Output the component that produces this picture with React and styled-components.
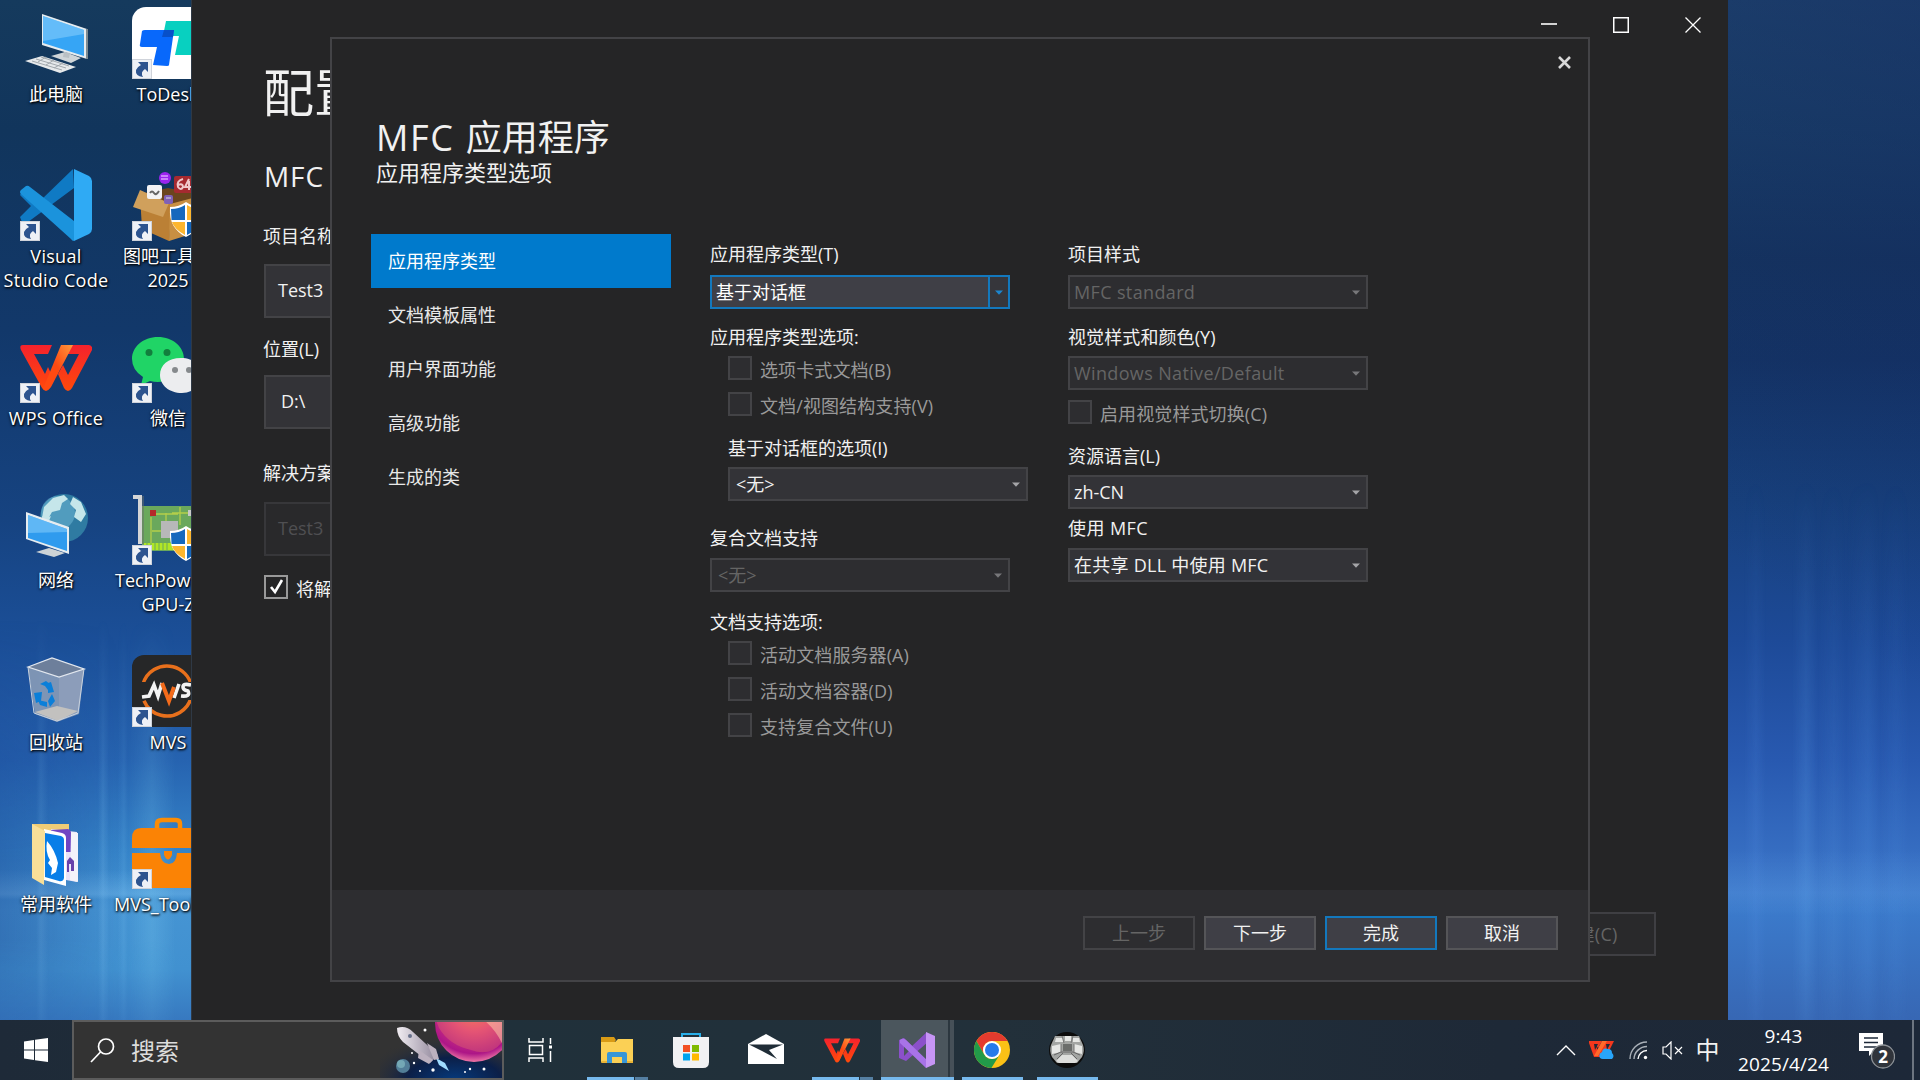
import React from "react";
import styled, { createGlobalStyle, css } from "styled-components";

const Global = createGlobalStyle`
  * { box-sizing: border-box; }
  body { margin: 0; background: #123558; overflow: hidden; }
  svg { display: block; flex: none; }
`;

/* ---------- desktop ---------- */
const Screen = styled.div`
  width: 1920px;
  height: 1080px;
  display: flex;
  flex-direction: column;
  overflow: hidden;
  font-family: "Open Sans", "Noto Sans CJK SC", sans-serif;
  font-size: 18px;
  line-height: 24px;
  color: #f1f1f1;
  white-space: nowrap;
`;
const Desktop = styled.main`
  position: relative;
  height: 1020px;
  flex: none;
  display: flex;
  justify-content: space-between;
  overflow: hidden;
`;
const wall = css`
  position: relative;
  isolation: isolate;
  height: 1020px;
  &::before {
    content: "";
    position: absolute;
    inset: 0;
    z-index: -1;
  }
`;
const LeftWall = styled.div`
  ${wall}
  width: 224px;
  padding-top: 7px;
  display: grid;
  grid-template-columns: 112px 112px;
  grid-auto-rows: 162px;
  background:
    linear-gradient(180deg, transparent 870px, rgba(140, 205, 250, 0.3) 894px, transparent 900px),
    linear-gradient(180deg, #153a5d 0, #11355c 130px, #12386a 330px, #164381 520px, #1b4f98 640px, #2663b0 760px, #3583c8 850px, #4594d3 910px, #4191d0 970px, #3779c0 1020px);
  &::before {
    background:
      linear-gradient(90deg, rgba(14, 40, 120, 0.3), transparent 55%),
      linear-gradient(90deg, transparent 36px, rgba(130, 200, 245, 0.22) 41px, transparent 48px, transparent 98px, rgba(130, 200, 245, 0.24) 103px, transparent 109px, transparent 118px, rgba(130, 200, 245, 0.14) 124px, transparent 128px, rgba(130, 210, 245, 0.24) 152px, transparent 176px);
    mask-image: linear-gradient(180deg, transparent 620px, #000 860px, #000 940px, rgba(0, 0, 0, 0.4) 1020px);
  }
`;
const RightWall = styled.div`
  ${wall}
  width: 194px;
  background:
    linear-gradient(180deg, transparent 850px, rgba(120, 180, 245, 0.18) 893px, transparent 915px),
    linear-gradient(215deg, rgba(18, 36, 96, 0.45), transparent 60%),
    linear-gradient(180deg, #20496f 0, #1a4168 130px, #15355f 260px, #143465 360px, #17407c 500px, #1d4a98 640px, #2859b0 760px, #376fc3 860px, #3b7acb 910px, #3767b4 1020px);
  &::before {
    background: linear-gradient(90deg, transparent 18px, rgba(90, 150, 235, 0.16) 30px, transparent 40px, transparent 66px, rgba(100, 170, 240, 0.2) 80px, transparent 92px, rgba(100, 170, 240, 0.1) 108px, transparent 120px, rgba(80, 150, 230, 0.2) 142px, transparent 154px, rgba(80, 150, 230, 0.12) 170px, transparent 184px);
    mask-image: linear-gradient(180deg, transparent 480px, #000 800px, #000 960px, rgba(0, 0, 0, 0.5) 1020px);
  }
`;
const Shortcut = styled.div`
  display: flex;
  flex-direction: column;
  align-items: center;
`;
const Glyph = styled.div`
  position: relative;
  width: 72px;
  height: 72px;
`;
const ArrowBadge = styled.div`
  position: absolute;
  left: 0;
  bottom: 0;
  width: 20px;
  height: 20px;
  background: #eef1f6;
  border: 1px solid #cfd3da;
`;
const Caption = styled.span`
  margin: 3px 0 0 ${(p) => p.$shift || 0}px;
  text-align: center;
  color: #fff;
  line-height: 24px;
  white-space: pre;
  letter-spacing: ${(p) => p.$track || 0}px;
  text-shadow: 1px 1px 2px #000, 0 1px 3px rgba(0, 0, 0, 0.8);
`;

/* ---------- windows ---------- */
const BackWindow = styled.section`
  position: absolute;
  left: 191px;
  top: 0;
  width: 1537px;
  height: 1020px;
  background: #252526;
  border-left: 1px solid #2f3945;
  display: flex;
  flex-direction: column;
`;
const CaptionBar = styled.header`
  height: 50px;
  display: flex;
  justify-content: flex-end;
  align-items: center;
  gap: 48px;
  padding: 0 23px 0 0;
`;
const CaptionGlyph = styled.div`
  width: 24px;
  display: flex;
  justify-content: center;
`;
const BackForm = styled.div`
  padding: 11px 0 0 72px;
  display: flex;
  flex-direction: column;
  align-items: flex-start;
`;
const BackTitle = styled.h1`
  margin: 0 0 0 -1px;
  font-size: 51px;
  line-height: 62px;
  font-weight: 400;
`;
const BackSub = styled.h2`
  margin: 35px 0 0;
  font-size: 28px;
  line-height: 36px;
  font-weight: 400;
  letter-spacing: 0.9px;
`;
const BackField = styled.div`
  margin: ${(p) => p.$mt}px 0 ${(p) => p.$mb}px -1px;
  height: 24px;
  line-height: 23px;
`;
const BackInput = styled.div`
  width: 800px;
  height: 54px;
  padding-left: ${(p) => p.$pad || 12}px;
  line-height: 49px;
  border: 2px solid ${(p) => (p.$off ? "#37373a" : "#434346")};
  background: ${(p) => (p.$off ? "#29292b" : "#333337")};
  color: ${(p) => (p.$off ? "#4f4f52" : "#f1f1f1")};
`;
const BackCheck = styled.div`
  margin-top: 19px;
  height: 24px;
  display: flex;
  gap: 8px;
`;
const Ticked = styled.div`
  width: 24px;
  height: 24px;
  border: 2px solid #999;
  background: #252526;
`;
const BackFooter = styled.footer`
  margin: auto 72px 64px 0;
  display: flex;
  justify-content: flex-end;
`;
const CreateButton = styled.div`
  width: 136px;
  height: 44px;
  border: 2px solid #3f3f43;
  background: #29292b;
  color: #656565;
  text-align: center;
  line-height: 40px;
  letter-spacing: 0.3px;
`;

const Dialog = styled.section`
  position: absolute;
  left: 330px;
  top: 37px;
  width: 1260px;
  height: 945px;
  border: 2px solid #434346;
  background: #252526;
  display: flex;
  flex-direction: column;
`;
const DialogHead = styled.header`
  height: 195px;
  padding: 17px 16px 0 44px;
  display: flex;
  flex-direction: column;
`;
const CloseRow = styled.div`
  display: flex;
  justify-content: flex-end;
  height: 14px;
`;
const DialogTitle = styled.h1`
  margin: 46px 0 0;
  font-size: 36px;
  line-height: 44px;
  font-weight: 400;
`;
const Wide = styled.span`
  letter-spacing: 1.7px;
`;
const DialogSub = styled.h2`
  margin: -2px 0 0;
  font-size: 22px;
  line-height: 28px;
  font-weight: 400;
`;
const DialogBody = styled.div`
  flex: 1;
  display: flex;
  padding-left: 39px;
`;
const Nav = styled.nav`
  width: 300px;
`;
const NavItem = styled.div`
  height: 54px;
  padding-left: 17px;
  line-height: 55px;
  background: ${(p) => (p.$on ? "#007acc" : "transparent")};
  color: ${(p) => (p.$on ? "#fff" : "#e8e8e8")};
`;
const Column = styled.div`
  width: ${(p) => p.$w}px;
  margin-left: ${(p) => p.$ml}px;
  padding-top: 9px;
  display: flex;
  flex-direction: column;
`;
const Indent = styled.div`
  margin-left: 18px;
`;
const Label = styled.div`
  height: 24px;
  margin: ${(p) => p.$mt || 0}px 0 ${(p) => p.$mb || 6}px;
  line-height: 23px;
  color: #f1f1f1;
  letter-spacing: ${(p) => p.$track || 0}px;
`;
const SelectBox = styled.div`
  width: 300px;
  height: 34px;
  display: flex;
  justify-content: space-between;
  padding-left: ${(p) => p.$pad || 4}px;
  line-height: 30px;
  border: 2px solid #434346;
  background: #333337;
  color: #f1f1f1;
  letter-spacing: ${(p) => p.$track || 0}px;
  ${(p) => p.$off && css`background: #2d2d30; color: #656565;`}
  ${(p) => p.$hot && css`background: #3f3f46; border-color: #1378bd; color: #fff;`}
`;
const ArrowCell = styled.div`
  width: 20px;
  height: 30px;
  display: flex;
  align-items: center;
  justify-content: center;
  ${(p) => p.$hot && css`border-left: 2px solid #1378bd; background: #36363b;`}
`;
const CheckRow = styled.div`
  height: 24px;
  margin-top: ${(p) => p.$mt || 0}px;
  display: flex;
  gap: 8px;
  color: #999;
`;
const CheckBox = styled.div`
  width: 24px;
  height: 24px;
  border: 2px solid #434346;
  background: #2d2d30;
`;
const CheckText = styled.span`
  height: 24px;
  margin-top: 2px;
  letter-spacing: 0.1px;
`;
const DialogFoot = styled.footer`
  height: 90px;
  padding: 26px 30px 0 0;
  display: flex;
  justify-content: flex-end;
  gap: 9px;
  background: #2d2d30;
`;
const Button = styled.div`
  width: 112px;
  height: 34px;
  border: 2px solid #555558;
  background: #3f3f46;
  color: #f1f1f1;
  line-height: 30px;
  text-align: center;
  ${(p) => p.$off && css`background: #2d2d30; border-color: #434346; color: #656565;`}
  ${(p) => p.$hot && css`border-color: #1378bd;`}
`;

/* ---------- taskbar ---------- */
const Taskbar = styled.footer`
  height: 60px;
  display: flex;
  background: linear-gradient(90deg, #1e2a38 0, #20303a 500px, #22303a 1000px, #1e2937 1500px, #1d2838 100%);
`;
const Start = styled.div`
  width: 72px;
  display: flex;
  align-items: center;
  justify-content: center;
`;
const Search = styled.div`
  width: 432px;
  height: 60px;
  display: flex;
  align-items: center;
  border: 2px solid #5c5c5c;
  background: #333;
  padding-left: 16px;
  overflow: hidden;
`;
const SearchText = styled.span`
  margin: 2px 0 0 16px;
  flex: 1;
  font-size: 24px;
  line-height: 32px;
  color: #dcdcdc;
`;
const Art = styled.div`
  margin: -2px -2px -2px 0;
`;
const Slot = styled.div`
  width: ${(p) => p.$w}px;
  height: 60px;
  margin-left: ${(p) => p.$ml || 0}px;
  display: flex;
  flex-direction: column;
  align-items: center;
  background: ${(p) => (p.$on ? "linear-gradient(90deg, #4b565d 67px, #2c373f 67px, #2c373f 69px, #465058 69px)" : "transparent")};
`;
const SlotIcon = styled.div`
  height: 57px;
  display: flex;
  align-items: center;
  padding: 3px 2px 0 0;
`;
const Underline = styled.div`
  align-self: stretch;
  height: 3px;
  background: ${(p) => (p.$stack ? "linear-gradient(90deg, #76b9ed 47px, #1f3343 47px, #1f3343 48px, #557fa2 48px)" : "#76b9ed")};
`;
const Tray = styled.div`
  margin-left: auto;
  display: flex;
  align-items: center;
`;
const TrayItem = styled.div`
  width: ${(p) => p.$w}px;
  display: flex;
  justify-content: center;
  font-size: ${(p) => p.$size || 18}px;
`;
const Clock = styled.div`
  width: 111px;
  text-align: center;
  font-size: 19px;
  line-height: 28px;
  letter-spacing: 0.1px;
  color: #fff;
`;
const Peek = styled.div`
  width: 8px;
  height: 60px;
  border-left: 2px solid #6d7580;
`;

/* ---------- drawings ---------- */
const Triangle = ({ color }) => (
  <svg width="8" height="5" viewBox="0 0 8 5"><path d="M0 .5h8L4 4.700z" fill={color} /></svg>
);
const WpsMark = ({ w = 72, h = 48 }) => (
  <svg width={w} height={h} viewBox="0 0 72 48" preserveAspectRatio="none">
    <defs>
      <linearGradient id="wps" x1="0" y1="0" x2="0" y2="1"><stop offset="0" stopColor="#f5222d" /><stop offset="1" stopColor="#ff4a0a" /></linearGradient>
      <linearGradient id="wps2" x1="1" y1="0" x2="0" y2="1"><stop offset="0" stopColor="#ff9a3d" /><stop offset=".5" stopColor="#ff4a12" /></linearGradient>
    </defs>
    <path d="M3 1h29l-4 9H14l11 20 3-7 6 13-4 8q-4 6-8 0L1 6Q-1 1 3 1z" fill="url(#wps)" />
    <path d="M51 1h18q4 1 3 5L52 44q-4 6-8 0l-6-14 5-9 5 10 11-21H47z" fill="url(#wps)" />
    <path d="M41 1h12L31 43q-4 5-8 2z" fill="url(#wps2)" />
  </svg>
);
const Shield = () => (
  <g>
    <path d="M38 38q9 0 16-5 7 5 16 5c1 16-5 24-16 30-11-6-17-14-16-30z" fill="#fff" />
    <path d="M39 40q8 0 14-4v15H39.500z" fill="#1668bd" />
    <path d="M55 36q6 4 14 4l-.5 11H55z" fill="#fdb62f" />
    <path d="M40 53h13v13Q42 60 40 53z" fill="#fdb62f" />
    <path d="M55 53h13q-2 8-13 13z" fill="#1668bd" />
  </g>
);
const art = {
  pc: (
    <>
      <path d="M22 7l45 15v30L22 38z" fill="#e7ecef" /><path d="M66 22l2 0v30h-2z" fill="#7d8b93" />
      <path d="M23 9l41 14v26L23 36z" fill="#36a5f5" /><path d="M23 9l41 14v4L23 34z" fill="#8bd0fb" opacity=".55" />
      <path d="M31 49l14-4 16 6-10 5z" fill="#cfd5d8" /><path d="M44 45l6 1-1 5-6-1z" fill="#b9c0c4" />
      <path d="M5 54l17-5 34 11-16 6z" fill="#e6e9eb" /><path d="M12 54l30 9M16 52l30 9M21 50l28 9M18 55l8-5M26 58l8-5M34 61l9-5" stroke="#a2a8ad" strokeWidth="1" />
    </>
  ),
  todesk: (
    <>
      <rect width="86" height="72" rx="14" fill="#fff" /><path d="M34 14h34v34H43l4-19H31z" fill="#08d0c0" />
      <path d="M10 24q1-1 3-1h29l-5 35q0 1-2 1l-14-1 4-18H10q-3 0-2-3z" fill="#0868fb" /><path d="M32 23h10l-1 7H30z" fill="#0850c8" />
    </>
  ),
  code: (
    <>
      <path d="M53 0L20 32 7 22q-3-2-5 0l-2 4 11 11L0 48l2 5q3 3 6 0L54 19z" fill="#0f7ac4" />
      <path d="M1 21l5-4q2-1 4 1l44 34v20q-2 0-3-2L1 25q-2-2 0-4z" fill="#1b93dc" />
      <path d="M54 0l15 7q3 2 3 5v48q0 3-3 5l-15 7z" fill="#2faaf4" />
    </>
  ),
  box: (
    <>
      <path d="M8 25l28-6 30 6v12l-30 8z" fill="#6b451d" />
      <circle cx="33" cy="9" r="6" fill="#9a25ee" /><path d="M29 7h7M29 10h7" stroke="#d9a0ff" strokeWidth="1.300" /><rect x="42" y="7" width="20" height="17" rx="2" fill="#a52a30" />
      <path d="M51 10q-7 2-5 8 3 4 5 0 0-4-5-2M57 10l-4 8h6M57 12v9" fill="none" stroke="#efc9cb" strokeWidth="2" />
      <path d="M8 25l32 10-3 37-27-12z" fill="#bb8035" /><path d="M38 35l34-9v35l-35 11z" fill="#c88f42" />
      <path d="M8 21L1 38l30 10 6-14z" fill="#d0a05c" />
      <rect x="15" y="16" width="15" height="14" rx="2" fill="#f3f3f5" /><path d="M18 24q2-3 4 0t5-2" stroke="#666" fill="none" strokeWidth="2" /><rect x="32" y="26" width="9" height="9" rx="2" fill="#8060b5" /><path d="M34 29h5" stroke="#ddd" />
      <Shield />
    </>
  ),
  wps: <g transform="translate(0 13)"><WpsMark /></g>,
  wechat: (
    <>
      <path d="M26 6c15 0 26 10 26 22S41 51 26 51q-4 0-8-1l-9 4 2-8Q0 39 0 28C0 16 11 6 26 6z" fill="#20d466" />
      <circle cx="17" cy="21.500" r="3.500" fill="#127e3d" /><circle cx="35" cy="21.500" r="3.500" fill="#127e3d" />
      <path d="M49 27c13 0 22 8 22 18 0 6-3 10-7 13l1 5-6-3q-4 2-9 2c-13 0-22-8-22-18s8-17 21-17z" fill="#ecedef" />
      <circle cx="43" cy="39" r="3" fill="#85898c" /><circle cx="57" cy="39" r="3" fill="#85898c" />
    </>
  ),
  network: (
    <>
      <circle cx="44" cy="25" r="24" fill="#2f7ba2" /><circle cx="38" cy="20" r="17" fill="#69b2d0" opacity=".6" />
      <path d="M24 14l9-9 11-3 4 4-6 4-2 7-8 2-4 7-6-1zM53 4l8 5 5 12-5 8-7-5 2-7-6-6zM22 23l5 2 4-2-2 5-6 1z" fill="#c5e6ea" />
      <path d="M6 19l43 15v27L6 46z" fill="#e7edf0" /><path d="M8 22l39 14v22L8 45z" fill="#2f9bee" /><path d="M8 22l39 14v3L8 40z" fill="#80cafa" opacity=".6" />
      <path d="M16 59l13-4 16 5-11 4z" fill="#cdd3d6" />
    </>
  ),
  gpu: (
    <>
      <path d="M10 13h62v45H10z" fill="#6aa85c" /><path d="M12 50h30v7H12z" fill="#b0e626" /><path d="M15 50v7M19 50v7M23 50v7M27 50v7M31 50v7M35 50v7" stroke="#6aa85c" /><path d="M22 21h24M19 24v26M34 20v10M40 20h18M20 38h10M48 14v18" stroke="#b4ce4a" strokeWidth="1.300" fill="none" />
      <rect x="29" y="28" width="17" height="17" fill="#b7b8b8" /><rect x="18" y="17" width="6" height="6" fill="#b5282a" /><rect x="56" y="17" width="6" height="6" fill="#c8c9c9" />
      <path d="M1 4h7v47" fill="none" stroke="#d4d5d6" strokeWidth="4" /><path d="M11 3v48" stroke="#67716a" />
      <Shield />
    </>
  ),
  bin: (
    <>
      <path d="M8 12l24-9 32 11-5 45-22 8-22-8z" fill="#8ea0b9" opacity=".85" />
      <path d="M8 12l24-9 32 11-25 8z" fill="#6d7f9b" /><path d="M39 22l25-8-6 43-19 9z" fill="#8c9dba" /><path d="M15 57l22-6 21 5-20 10z" fill="#c2c1bf" />
      <path d="M8 12l24-9 32 11-25 8z" fill="none" stroke="#e2e7ee" strokeWidth="1.300" /><path d="M8 12l6 46 23 8 21-8 6-44" fill="none" stroke="#c9d2de" strokeWidth="1" />
      <path d="M20 29l6-3 5 4-3 5-3-4zM28 28l3-1 3 10-6 1zM14 38l8-1-1 9-5 2zM18 45l9 2v5l-7-2zM28 46l4-7 3 7-5 6z" fill="#0b7fd9" />
    </>
  ),
  mvs: (
    <>
      <rect width="90" height="72" rx="12" fill="#262728" /><circle cx="35" cy="36" r="25" fill="none" stroke="#e8701c" strokeWidth="3.500" strokeDasharray="62 16 66 13" transform="rotate(14 35 36)" />
      <rect x="9" y="27" width="54" height="18" fill="#262728" /><path d="M10 42l7-1 5-11 4 11 4-13M42 43l5-14M59 30q-8-2-8 2 0 3 5 4 3 6-7 5" fill="none" stroke="#f3f3f3" strokeWidth="3.600" /><path d="M30 28l7 18 5-14" fill="none" stroke="#f36b1b" strokeWidth="4" />
    </>
  ),
  folder: (
    <>
      <path d="M12 7h37v54H12z" fill="#efcc76" /><path d="M31 12l26 3v50l-22-4z" fill="#e9e2f7" /><path d="M31 13l17-1q3 1 3 4v19H32z" fill="#7145c3" /><path d="M51 15l7 1v49l-8-2z" fill="#f4f3fa" />
      <path d="M24 12l18 4q4 1 4 5v48l-22-6z" fill="#fff" /><path d="M25 16l16 3q3 1 3 4v38q-1 4-5 3l-14-4z" fill="#087ee8" /><path d="M27 24q8 9 11 22l-2 9-5 3 1-7-4-5 2-3q-5-8-3-19z" fill="#fff" /><path d="M47 55V44l3-4 4 4v10h-3v-7h-2v8z" fill="#6842ab" />
      <path d="M12 7l13 7-1 54-12-7z" fill="#f9df98" />
    </>
  ),
  toolbox: (
    <>
      <path d="M25 12V7q0-4 5-4h14q4 0 4 4v5" fill="none" stroke="#fb8c05" strokeWidth="4.500" />
      <path d="M0 21q0-10 9-10h67v20H0zM0 36h28q1 11 9 11 7 0 8-11h35v35H0z" fill="#fb8305" /><path d="M32 34v4q4 9 8 0v-4z" fill="#fb8305" />
    </>
  ),
};
const Chevron = () => <svg width="20" height="12" viewBox="0 0 20 12"><path d="M1 11l9-9 9 9" fill="none" stroke="#fff" strokeWidth="1.400" /></svg>;

const SpaceArt = () => (
  <svg width="124" height="60" viewBox="0 0 124 60">
    <defs>
      <radialGradient id="night" cx=".6" cy="1" r=".75"><stop offset="0" stopColor="#063a7c" /><stop offset=".5" stopColor="#0b1f48" /><stop offset="1" stopColor="#333" stopOpacity="0" /></radialGradient>
      <radialGradient id="planet" cx=".5" cy=".28" r=".72"><stop offset="0" stopColor="#f97b50" /><stop offset=".45" stopColor="#dd3f7c" /><stop offset=".85" stopColor="#ad1687" /><stop offset="1" stopColor="#ee75a4" /></radialGradient>
      <linearGradient id="hull"><stop offset="0" stopColor="#f1edf2" /><stop offset="1" stopColor="#8f8599" /></linearGradient>
    </defs>
    <rect width="124" height="60" fill="url(#night)" />
    <circle cx="94" cy="3" r="39" fill="url(#planet)" />
    <path d="M56 0h68v19Q112 38 91 30 69 25 59 8z" fill="#ff995c" opacity=".24" />
    <path d="M104 0h20v28Q118 12 104 0z" fill="#ffd4ab" opacity=".5" />
    <circle cx="23" cy="46" r="7" fill="#527e98" /><circle cx="21" cy="44" r="4" fill="#74a8b5" />
    <path d="M56 38l9 5 4 8-10-6z" fill="#9fdcff" />
    <path d="M17 8q9-3 16 4l25 23-8 8L23 22q-6-6-6-14z" fill="url(#hull)" />
    <path d="M39 30l-1 8 11 6 4-4zM47 23l9 6 3 10-5 1z" fill="#bcb1bf" /><circle cx="30" cy="16" r="2" fill="#67718b" />
    <g fill="#fff"><circle cx="45" cy="10" r="1.500" /><circle cx="34" cy="43" r="1.200" /><circle cx="53" cy="50" r="1.700" /><circle cx="90" cy="49" r="1.200" /><circle cx="104" cy="49" r="1.500" /><circle cx="85" cy="52" r="1" /><circle cx="40" cy="51" r="1" /><circle cx="32" cy="33" r="1" /></g>
  </svg>
);

const desktopIcons = [
  { id: "pc", name: "此电脑" },
  { id: "todesk", name: "ToDesk", link: true, shift: -1 },
  { id: "code", name: "Visual\nStudio Code", link: true, track: 0.3 },
  { id: "box", name: "图吧工具箱\n2025", link: true },
  { id: "wps", name: "WPS Office", link: true, track: 0.3 },
  { id: "wechat", name: "微信", link: true },
  { id: "network", name: "网络" },
  { id: "gpu", name: "TechPowerU\nGPU-Z", link: true },
  { id: "bin", name: "回收站" },
  { id: "mvs", name: "MVS", link: true },
  { id: "folder", name: "常用软件" },
  { id: "toolbox", name: "MVS_Toolbox", link: true, shift: 4 },
];
const navItems = ["应用程序类型", "文档模板属性", "用户界面功能", "高级功能", "生成的类"];

const Select = ({ children, off, hot, pad, track }) => (
  <SelectBox $off={off} $hot={hot} $pad={pad} $track={track}>
    <span>{children}</span>
    <ArrowCell $hot={hot}><Triangle color={hot ? "#1c86cf" : off ? "#77777a" : "#a5a5a8"} /></ArrowCell>
  </SelectBox>
);
const Check = ({ children, mt }) => (
  <CheckRow $mt={mt}><CheckBox /><CheckText>{children}</CheckText></CheckRow>
);

export default function App() {
  return (
    <Screen>
      <Global />
      <Desktop>
        <LeftWall>
          {desktopIcons.map(({ id, name, link, shift, track }) => (
            <Shortcut key={id}>
              <Glyph>
                <svg width="72" height="72" viewBox="0 0 72 72">{art[id]}</svg>
                {link && (
                  <ArrowBadge>
                    <svg width="18" height="18" viewBox="0 0 18 18"><path d="M5 2h10v10l-3-3q-5 3-2 8-8-1-7-7 1-3 5-5z" fill="#2d548f" /></svg>
                  </ArrowBadge>
                )}
              </Glyph>
              <Caption $shift={shift} $track={track}>{name}</Caption>
            </Shortcut>
          ))}
        </LeftWall>
        <RightWall />

        <BackWindow>
          <CaptionBar>
            <CaptionGlyph><svg width="16" height="16"><path d="M0 7h16" stroke="#fff" strokeWidth="1.600" /></svg></CaptionGlyph>
            <CaptionGlyph><svg width="16" height="16"><rect x=".75" y=".75" width="14.500" height="14.500" fill="none" stroke="#fff" strokeWidth="1.500" /></svg></CaptionGlyph>
            <CaptionGlyph><svg width="16" height="16"><path d="M.5.5l15 15M15.500.5l-15 15" stroke="#fff" strokeWidth="1.300" /></svg></CaptionGlyph>
          </CaptionBar>
          <BackForm>
            <BackTitle>配置</BackTitle>
            <BackSub>MFC</BackSub>
            <BackField $mt={31} $mb={15}>项目名称</BackField>
            <BackInput>Test3</BackInput>
            <BackField $mt={20} $mb={13}>位置(L)</BackField>
            <BackInput $pad={15}>D:\</BackInput>
            <BackField $mt={33} $mb={16}>解决方案</BackField>
            <BackInput $off>Test3</BackInput>
            <BackCheck>
              <Ticked><svg width="20" height="20"><path d="M5 10l4 5 7-12" fill="none" stroke="#fff" strokeWidth="2.600" /></svg></Ticked>
              <CheckText>将解</CheckText>
            </BackCheck>
          </BackForm>
          <BackFooter><CreateButton>创建(C)</CreateButton></BackFooter>
        </BackWindow>

        <Dialog>
          <DialogHead>
            <CloseRow><svg width="15" height="13" viewBox="0 0 15 13"><path d="M2 1l11 11M13 1l-11 11" stroke="#d8d8d8" strokeWidth="2.600" /></svg></CloseRow>
            <DialogTitle><Wide>MFC </Wide>应用程序</DialogTitle>
            <DialogSub>应用程序类型选项</DialogSub>
          </DialogHead>
          <DialogBody>
            <Nav>{navItems.map((n, i) => <NavItem key={n} $on={i === 0}>{n}</NavItem>)}</Nav>
            <Column $w={318} $ml={39}>
              <Label $mb={8}>应用程序类型(T)</Label>
              <Select hot>基于对话框</Select>
              <Label $mt={17}>应用程序类型选项:</Label>
              <Indent>
                <Check>选项卡式文档(B)</Check>
                <Check mt={12}>文档/视图结构支持(V)</Check>
                <Label $mt={21}>基于对话框的选项(I)</Label>
                <Select pad={6}>&lt;无&gt;</Select>
              </Indent>
              <Label $mt={26} $mb={7}>复合文档支持</Label>
              <Select off pad={6}>&lt;无&gt;</Select>
              <Label $mt={19}>文档支持选项:</Label>
              <Indent>
                <Check>活动文档服务器(A)</Check>
                <Check mt={12}>活动文档容器(D)</Check>
                <Check mt={12}>支持复合文件(U)</Check>
              </Indent>
            </Column>
            <Column $w={300} $ml={40}>
              <Label $mb={8}>项目样式</Label>
              <Select off track={0.36}>MFC standard</Select>
              <Label $mt={17} $track={0.1}>视觉样式和颜色(Y)</Label>
              <Select off track={0.36}>Windows Native/Default</Select>
              <Check mt={10}>启用视觉样式切换(C)</Check>
              <Label $mt={21}>资源语言(L)</Label>
              <Select>zh-CN</Select>
              <Label $mt={8} $mb={7} $track={0.4}>使用 MFC</Label>
              <Select track={0.25}>在共享 DLL 中使用 MFC</Select>
            </Column>
          </DialogBody>
          <DialogFoot>
            <Button $off>上一步</Button>
            <Button>下一步</Button>
            <Button $hot>完成</Button>
            <Button>取消</Button>
          </DialogFoot>
        </Dialog>
      </Desktop>

      <Taskbar>
        <Start><svg width="24" height="24" viewBox="0 0 24 24"><path d="M0 3.400L10 2v9.500H0zM11 1.800L24 0v11.500H11zM0 12.500h10V22L0 20.600zM11 12.500h13V24l-13-1.800z" fill="#fff" /></svg></Start>
        <Search>
          <svg width="25" height="25" viewBox="0 0 25 25"><circle cx="16" cy="8.500" r="7.500" fill="none" stroke="#fff" strokeWidth="1.700" /><path d="M10.500 14L1 24" stroke="#fff" strokeWidth="1.700" /></svg>
          <SearchText>搜索</SearchText>
          <Art><SpaceArt /></Art>
        </Search>
        <Slot $w={62} $ml={6}><SlotIcon><svg width="25" height="24" viewBox="0 0 25 24"><path d="M1 0v4h14V0M1 24v-4h14v4M1.500 7.500h13v9h-13zM22.500 0v6M22.500 13v11" fill="none" stroke="#fff" strokeWidth="1.500" /><rect x="21" y="7.500" width="3" height="3" fill="#fff" /></svg></SlotIcon></Slot>
        <Slot $w={61} $ml={15}>
          <SlotIcon><svg width="34" height="28" viewBox="0 0 34 28"><path d="M1 1h13l2 3-2 3H1z" fill="#d99b15" /><path d="M1 6h14l3-3h15v23q0 1-2 1H3q-2 0-2-1z" fill="#fbd055" /><path d="M7 27V18q0-2 2-2h16q2 0 2 2v9h-5v-6H12v6z" fill="#3796d8" /><path d="M1 25h6v2H2zM27 25h6v2h-6z" fill="#eab335" /></svg></SlotIcon>
          <Underline $stack />
        </Slot>
        <Slot $w={61} $ml={13}><SlotIcon><svg width="36" height="36" viewBox="0 0 36 36"><path d="M9 7V2h18v5" fill="none" stroke="#28aee8" strokeWidth="2" /><path d="M0 5h36v25q0 6-6 6H6q-6 0-6-6z" fill="#f1f1f3" /><path d="M10 13h7v7h-7z" fill="#f25022" /><path d="M19 13h7v7h-7z" fill="#7fba00" /><path d="M10 21.500h7v7h-7z" fill="#00a4ef" /><path d="M19 21.500h7v7h-7z" fill="#ffb900" /></svg></SlotIcon></Slot>
        <Slot $w={61} $ml={14}><SlotIcon><svg width="36" height="32" viewBox="0 0 36 32"><path d="M0 10L18 0l18 10v20H0z" fill="#fff" /><path d="M1 10.500h34L21 16l8 9-17-9z" fill="#202d37" /></svg></SlotIcon></Slot>
        <Slot $w={61} $ml={15}><SlotIcon><WpsMark w={36} h={25} /></SlotIcon><Underline $stack /></Slot>
        <Slot $w={73} $ml={8} $on>
          <SlotIcon><svg width="36" height="36" viewBox="0 0 36 36"><path d="M0 8l5-2 8 8 15-14 1 10L7 29l-7-3z" fill="#8b50ca" /><path d="M5 13v11l6-6z" fill="#4b565d" /><path d="M1 8q3-3 6 0l23 22-3 6L1 11z" fill="#a873e8" /><path d="M27 0l9 4v28l-9 4z" fill="#c795f5" /></svg></SlotIcon>
          <Underline />
        </Slot>
        <Slot $w={61} $ml={8}>
          <SlotIcon><svg width="36" height="36" viewBox="0 0 36 36"><circle cx="18" cy="18" r="18" fill="#fbc116" /><path d="M2.400 9a18 18 0 0131.200 0H18a9 9 0 00-7.800 13.500z" fill="#e33b2e" /><path d="M2.400 9a18 18 0 0015 27l8.400-13.500a9 9 0 01-15.600 0z" fill="#229a49" /><circle cx="18" cy="18" r="9" fill="#fff" /><circle cx="18" cy="18" r="7" fill="#267bea" /></svg></SlotIcon>
          <Underline />
        </Slot>
        <Slot $w={61} $ml={14}>
          <SlotIcon><svg width="36" height="36" viewBox="0 0 36 36"><circle cx="18" cy="18" r="18" fill="#0c0c0c" /><path d="M6 4h24l4 9q2 6-1 12l-5 6H8l-5-6q-3-6-1-12z" fill="#a3a5a3" /><path d="M7 6h7v4H6zM16 4h6v5h-6zM24 6h6l1 4h-7zM3 14l9-2v8l-9 2zM25 12l8 2v8l-8-2z" fill="#e6e7e5" /><path d="M14 12h9v7h-9z" fill="#6b6d6b" /><path d="M5 23l7-3h12l7 3M8 27l6-6M28 27l-6-6" stroke="#666" fill="none" /><path d="M7 29l6-6h10l6 6-3 2H10z" fill="#dddedc" /><path d="M13 4l2 7M24 4l-2 7M12 12v9M25 12v9" stroke="#777" strokeWidth="1" /></svg></SlotIcon>
          <Underline />
        </Slot>

        <Tray>
          <TrayItem $w={34}><Chevron /></TrayItem>
          <TrayItem $w={36}>
            <svg width="25" height="20" viewBox="0 0 25 20"><path d="M0 1h13l-4 7-3-4 4 9 6-12h9l-8 16H5L0 3z" fill="#f4381d" /><path d="M5 4h4L6 10zM17 4h4l-3 6z" fill="#1e2937" /><path d="M13 1h5L9 16H5z" fill="#ff6a2a" /><path d="M11 18q-2-4 2-6 1-5 6-3 4 0 4 4 3 3 0 6H14q-2 0-3-1z" fill="#28a5fa" /></svg>
          </TrayItem>
          <TrayItem $w={38}>
            <svg width="19" height="19" viewBox="0 0 19 19"><g fill="none" strokeWidth="1.400" stroke="#a9b0b8"><path d="M1 18A17 17 0 0118 1" /><path d="M5 18A13 13 0 0118 5.500" /><path d="M9 18a9 9 0 019-8.500" stroke="#fff" /></g><circle cx="16.500" cy="16.500" r="1.700" fill="#fff" /></svg>
          </TrayItem>
          <TrayItem $w={30}>
            <svg width="21" height="19" viewBox="0 0 21 19"><path d="M1 6h3l5-5v17l-5-5H1zM13 6l7 7M20 6l-7 7" fill="none" stroke="#fff" strokeWidth="1.200" /></svg>
          </TrayItem>
          <TrayItem $w={41} $size={24}>中</TrayItem>
          <Clock>9:43<br />2025/4/24</Clock>
          <TrayItem $w={73}>
            <svg width="38" height="38" viewBox="0 0 38 38"><path d="M2 2h24v18H17l-5 5v-5H2z" fill="#fff" /><path d="M7 7h14M7 11.500h14M7 16h14" stroke="#1d2838" strokeWidth="1.400" /><circle cx="26" cy="25.500" r="11.500" fill="#30343b" stroke="#8d9297" strokeWidth="1.300" /><text x="26" y="32" textAnchor="middle" fontSize="17" fontWeight="700" fill="#fff">2</text></svg>
          </TrayItem>
          <Peek />
        </Tray>
      </Taskbar>
    </Screen>
  );
}
